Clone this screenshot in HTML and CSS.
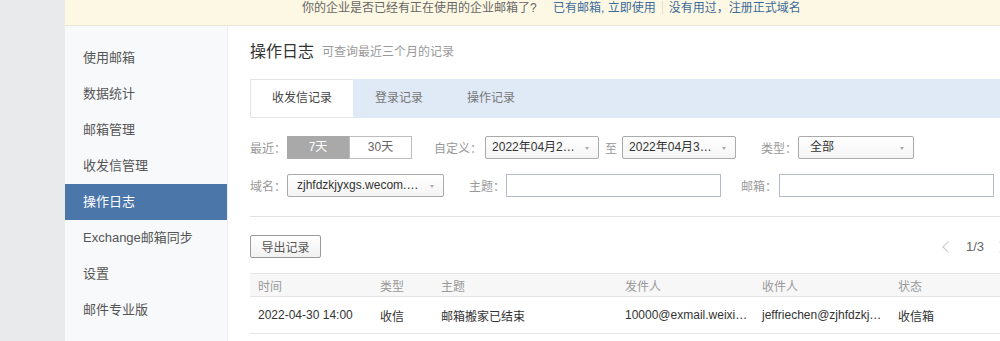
FILE: index.html
```html
<!DOCTYPE html>
<html>
<head>
<meta charset="utf-8">
<link rel="stylesheet" href="styles.css">
<title>操作日志</title>
</head>
<body>
<div class="rail"></div>
<div class="app">
  <div class="banner">
    <span class="ask">你的企业是否已经有正在使用的企业邮箱了?</span>
    <a class="link">已有邮箱, 立即使用</a><span class="sep"></span><a class="link">没有用过，注册正式域名</a>
  </div>
  <div class="body">
    <ul class="side">
      <li>使用邮箱</li>
      <li>数据统计</li>
      <li>邮箱管理</li>
      <li>收发信管理</li>
      <li class="active">操作日志</li>
      <li>Exchange邮箱同步</li>
      <li>设置</li>
      <li>邮件专业版</li>
    </ul>
    <div class="main">
      <div class="title">操作日志<span class="sub">可查询最近三个月的记录</span></div>
      <div class="tabs">
        <div class="tab on">收发信记录</div>
        <div class="tab">登录记录</div>
        <div class="tab">操作记录</div>
      </div>

      <div class="filters">
        <div class="frow">
          <span class="lbl">最近：</span>
          <div class="seg"><span class="on">7天</span><span>30天</span></div>
          <span class="lbl gap23">自定义：</span>
          <div class="sel w114">2022年04月22日</div>
          <span class="lbl to">至</span>
          <div class="sel w114">2022年04月30日</div>
          <span class="lbl gap27">类型：</span>
          <div class="sel w116">全部</div>
        </div>
        <div class="frow">
          <span class="lbl">域名：</span>
          <div class="sel w157">zjhfdzkjyxgs.wecom.work</div>
          <span class="lbl gap25">主题：</span>
          <input class="inp" type="text">
          <span class="lbl gap21">邮箱：</span>
          <input class="inp" type="text">
        </div>
      </div>

      <div class="toolbar">
        <button class="btn">导出记录</button>
        <div class="pager">
          <span class="chev left"></span>
          <span class="num">1/3</span>
          <span class="chev right"></span>
        </div>
      </div>

      <table class="log">
        <colgroup>
          <col style="width:122px"><col style="width:61px"><col style="width:184px">
          <col style="width:137px"><col style="width:136px"><col style="width:120px">
        </colgroup>
        <thead>
          <tr><th>时间</th><th>类型</th><th>主题</th><th>发件人</th><th>收件人</th><th>状态</th></tr>
        </thead>
        <tbody>
          <tr>
            <td>2022-04-30 14:00</td>
            <td>收信</td>
            <td>邮箱搬家已结束</td>
            <td>10000@exmail.weixin.qq.com</td>
            <td>jeffriechen@zjhfdzkjyxgs.wecom.work</td>
            <td>收信箱</td>
          </tr>
        </tbody>
      </table>
    </div>
  </div>
</div>
</body>
</html>
```

FILE: styles.css
```css
html, body
{
  margin: 0;
  height: 100%;
  overflow: hidden;
}
body
{
  display: flex;
  font-family: "Liberation Sans", "Noto Sans CJK SC", sans-serif;
  font-size: 12px;
  color: #333;
  background: #fff;
}
.rail
{
  width: 65px;
  flex: none;
  background: #e9eaec;
}
.app
{
  flex: none;
  width: 1000px;
  display: flex;
  flex-direction: column;
}

/* top notice */
.banner
{
  height: 25px;
  line-height: 17px;
  padding-left: 237px;
  background: #fdf8e3;
  border-bottom: 1px solid #e8e5da;
  color: #666;
  font-size: 12px;
  white-space: nowrap;
}
.banner .ask { margin-right: 13px; }
.banner .link { color: #3c6a9b; }
.banner .sep
{
  display: inline-block;
  width: 1px;
  height: 13px;
  background: #e3dfcf;
  margin: 0 6px;
  vertical-align: -2px;
}

.body
{
  display: flex;
  flex: 1;
}

/* sidebar */
.side
{
  list-style: none;
  margin: 0;
  padding: 14px 0 0;
  width: 162px;
  flex: none;
  background: #f8f9fb;
  border-right: 1px solid #eceef1;
}
.side li
{
  height: 36px;
  line-height: 36px;
  padding-left: 18px;
  font-size: 13px;
  color: #555;
}
.side li.active
{
  background: #4a76aa;
  color: #fff;
}

/* main */
.main
{
  padding-left: 22px;
  width: 760px;
  flex: none;
}
.title
{
  padding-top: 16px;
  height: 20px;
  line-height: 20px;
  margin-bottom: 17px;
  font-size: 16px;
  color: #333;
}
.title .sub
{
  font-size: 12px;
  color: #999;
  margin-left: 8px;
  vertical-align: 1px;
}

.tabs
{
  display: flex;
  height: 39px;
  background: #dfeaf6;
}
.tab
{
  width: 92px;
  text-align: center;
  line-height: 39px;
  color: #777;
}
.tab.on
{
  width: 102px;
  background: #fff;
  color: #444;
  border: 1px solid #e2e6ea;
  border-right: none;
  line-height: 37px;
}

.filters
{
  padding: 18px 0 19px;
  border-bottom: 1px solid #e2e2e2;
}
.frow
{
  display: flex;
  align-items: center;
  height: 23px;
}
.frow + .frow { margin-top: 15px; }
.lbl
{
  color: #999;
  white-space: nowrap;
  margin-right: 1px;
}
.gap23 { margin-left: 22px; margin-right: 3px; }
.gap27 { margin-left: 25px; }
.gap25 { margin-left: 25px; }
.gap21 { margin-left: 20px; margin-right: 2px; }
.to { margin: 0 5px 0 6px; }

.seg
{
  display: flex;
  height: 23px;
}
.seg span
{
  width: 61px;
  line-height: 21px;
  text-align: center;
  border: 1px solid #bdbdbd;
  color: #666;
}
.seg span.on
{
  width: 60px;
  background: #a9a9a9;
  border-color: #a9a9a9;
  color: #fff;
}

.sel
{
  position: relative;
  box-sizing: border-box;
  height: 23px;
  line-height: 21px;
  padding: 0 22px 0 6px;
  border: 1px solid #aaa;
  border-radius: 2px;
  background: linear-gradient(#fff, #f4f4f4);
  color: #333;
  white-space: nowrap;
  overflow: hidden;
  text-overflow: ellipsis;
}
.sel::after
{
  content: "";
  position: absolute;
  right: 9px;
  top: 10px;
  border-left: 2px solid transparent;
  border-right: 2px solid transparent;
  border-top: 3px solid #aaa;
}
.w114 { width: 114px; }
.w116 { width: 116px; padding-left: 11px; }
.w157 { width: 157px; padding-left: 9px; }

.inp
{
  box-sizing: border-box;
  width: 215px;
  height: 23px;
  margin: 0;
  border: 1px solid #b3bcc7;
  padding: 0 6px;
  font: inherit;
}

/* toolbar */
.toolbar
{
  display: flex;
  justify-content: space-between;
  align-items: center;
  margin-top: 18px;
}
.btn
{
  width: 71px;
  height: 23px;
  padding: 0;
  border: 1px solid #9a9a9a;
  border-radius: 2px;
  background: linear-gradient(#fff, #f1f1f1);
  font: inherit;
  color: #555;
}
.pager
{
  display: flex;
  align-items: center;
  padding-right: 6px;
}
.pager .num
{
  font-size: 13px;
  color: #666;
  margin: 0 12px 0 14px;
}
.chev
{
  width: 7px;
  height: 7px;
  border-left: 1px solid #c8c8c8;
  border-bottom: 1px solid #c8c8c8;
}
.chev.left { transform: rotate(45deg); }
.chev.right { transform: rotate(-135deg); }

/* table */
.log
{
  margin-top: 15px;
  width: 760px;
  border-collapse: collapse;
  table-layout: fixed;
}
.log th, .log td
{
  text-align: left;
  padding: 0 3px 0 8px;
  white-space: nowrap;
  overflow: hidden;
  text-overflow: ellipsis;
  font-weight: normal;
}
.log th
{
  height: 22px;
  background: #f7f7f8;
  color: #999;
  border-top: 1px solid #e3e5e8;
  border-bottom: 1px solid #e3e5e8;
}
.log td
{
  height: 36px;
  color: #333;
  border-bottom: 1px solid #e3e5e8;
}
```
